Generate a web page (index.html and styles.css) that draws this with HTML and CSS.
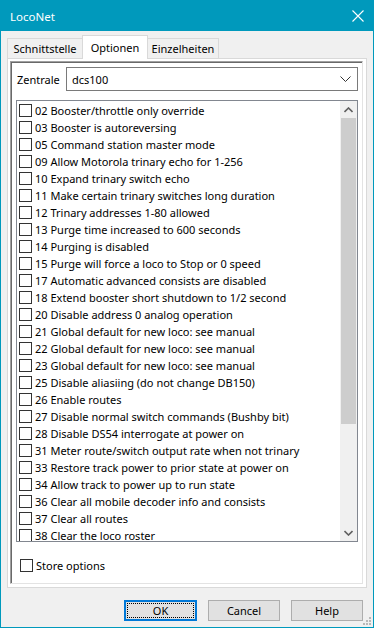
FILE: index.html
```html
<!DOCTYPE html>
<html>
<head>
<meta charset="utf-8">
<link rel="stylesheet" href="styles.css">
</head>
<body>
<div class="window">
  <div class="titlebar">
    <span class="title">LocoNet</span>
    <svg class="close" width="12" height="12" viewBox="0 0 12 12"><path d="M0.5 0.5 L11.5 11.5 M11.5 0.5 L0.5 11.5" stroke="#fff" stroke-width="1.1" fill="none"/></svg>
  </div>
  <div class="content">
    <div class="tabs">
      <div class="tab t1">Schnittstelle</div>
      <div class="tab t2 active">Optionen</div>
      <div class="tab t3">Einzelheiten</div>
    </div>
    <div class="panel">
      <div class="frame">
        <div class="zentrale">
          <span class="zlabel">Zentrale</span>
          <div class="combo">
            <span>dcs100</span>
            <svg width="11" height="7" viewBox="0 0 11 7"><path d="M0.5 0.5 L5.5 5.5 L10.5 0.5" stroke="#333" stroke-width="1" fill="none"/></svg>
          </div>
        </div>
        <div class="list">
          <div class="items">
            <div class="item"><span class="cb"></span>02 Booster/throttle only override</div>
            <div class="item"><span class="cb"></span>03 Booster is autoreversing</div>
            <div class="item"><span class="cb"></span>05 Command station master mode</div>
            <div class="item"><span class="cb"></span>09 Allow Motorola trinary echo for 1-256</div>
            <div class="item"><span class="cb"></span>10 Expand trinary switch echo</div>
            <div class="item"><span class="cb"></span>11 Make certain trinary switches long duration</div>
            <div class="item"><span class="cb"></span>12 Trinary addresses 1-80 allowed</div>
            <div class="item"><span class="cb"></span>13 Purge time increased to 600 seconds</div>
            <div class="item"><span class="cb"></span>14 Purging is disabled</div>
            <div class="item"><span class="cb"></span>15 Purge will force a loco to Stop or 0 speed</div>
            <div class="item"><span class="cb"></span>17 Automatic advanced consists are disabled</div>
            <div class="item"><span class="cb"></span>18 Extend booster short shutdown to 1/2 second</div>
            <div class="item"><span class="cb"></span>20 Disable address 0 analog operation</div>
            <div class="item"><span class="cb"></span>21 Global default for new loco: see manual</div>
            <div class="item"><span class="cb"></span>22 Global default for new loco: see manual</div>
            <div class="item"><span class="cb"></span>23 Global default for new loco: see manual</div>
            <div class="item"><span class="cb"></span>25 Disable aliasiing (do not change DB150)</div>
            <div class="item"><span class="cb"></span>26 Enable routes</div>
            <div class="item"><span class="cb"></span>27 Disable normal switch commands (Bushby bit)</div>
            <div class="item"><span class="cb"></span>28 Disable DS54 interrogate at power on</div>
            <div class="item"><span class="cb"></span>31 Meter route/switch output rate when not trinary</div>
            <div class="item"><span class="cb"></span>33 Restore track power to prior state at power on</div>
            <div class="item"><span class="cb"></span>34 Allow track to power up to run state</div>
            <div class="item"><span class="cb"></span>36 Clear all mobile decoder info and consists</div>
            <div class="item"><span class="cb"></span>37 Clear all routes</div>
            <div class="item"><span class="cb"></span>38 Clear the loco roster</div>
          </div>
          <div class="scrollbar">
            <div class="sbtn"><svg width="9" height="6" viewBox="0 0 9 6"><path d="M0.5 5 L4.5 1 L8.5 5" stroke="#606060" stroke-width="1.6" fill="none"/></svg></div>
            <div class="thumb"></div>
            <div class="track"></div>
            <div class="sbtn"><svg width="9" height="6" viewBox="0 0 9 6"><path d="M0.5 1 L4.5 5 L8.5 1" stroke="#606060" stroke-width="1.6" fill="none"/></svg></div>
          </div>
        </div>
        <div class="store"><span class="cb"></span>Store options</div>
      </div>
    </div>
    <div class="buttons">
      <div class="btn default"><span class="focus">OK</span></div>
      <div class="btn">Cancel</div>
      <div class="btn">Help</div>
    </div>
    <svg class="grip" width="9" height="9" viewBox="0 0 9 9" fill="#b8b8b8"><rect x="6" y="0" width="2" height="2"/><rect x="3" y="3" width="2" height="2"/><rect x="6" y="3" width="2" height="2"/><rect x="0" y="6" width="2" height="2"/><rect x="3" y="6" width="2" height="2"/><rect x="6" y="6" width="2" height="2"/></svg>
  </div>
</div>
</body>
</html>
```
FILE: styles.css
```css
* { box-sizing: border-box; }
html, body { margin: 0; padding: 0; }
body {
  font-family: "Noto Sans", "Open Sans", sans-serif;
  font-size: 11px;
  color: #000;
  background: #f0f0f0;
}
.window {
  width: 374px;
  height: 628px;
  border: 1px solid #0099bc;
  display: flex;
  flex-direction: column;
  background: #f0f0f0;
}
.titlebar {
  height: 30px;
  background: #0099bc;
  display: flex;
  align-items: center;
  justify-content: space-between;
  padding: 0 8px 0 9px;
  flex: none;
}
.title {
  color: #fff;
  font-size: 11.5px;
}
.close { margin-right: 1px; }
.content {
  flex: 1;
  display: flex;
  flex-direction: column;
  position: relative;
}
.tabs {
  display: flex;
  align-items: flex-end;
  height: 27px;
  padding-left: 6px;
  padding-top: 4px;
  position: relative;
  z-index: 1;
}
.tab {
  height: 20px;
  border: 1px solid #d9d9d9;
  border-bottom: none;
  background: #f0f0f0;
  display: flex;
  align-items: center;
  justify-content: center;
  line-height: 1;
}
.t1 { width: 76px; }
.t2 { width: 66px; }
.t3 { width: 72px; }
.tab + .tab { margin-left: -1px; }
.tab.active {
  height: 24px;
  background: #fff;
  margin-bottom: -1px;
  position: relative;
  z-index: 2;
}
.panel {
  margin: 0 6px;
  height: 530px;
  border: 1px solid #d9d9d9;
  background: #fff;
  padding: 2px 3px 3px 2px;
  display: flex;
  flex: none;
}
.frame {
  flex: 1;
  border: 1px solid;
  border-color: #a0a0a0 #e3e3e3 #e3e3e3 #a0a0a0;
  box-shadow: inset 1px 1px 0 #696969;
  padding: 5px 4px 0 6px;
  display: flex;
  flex-direction: column;
}
.zentrale {
  display: flex;
  align-items: center;
  height: 24px;
}
.zlabel {
  width: 49px;
  flex: none;
}
.combo {
  flex: 1;
  height: 24px;
  border: 1px solid #7a7a7a;
  background: #fff;
  display: flex;
  align-items: center;
  justify-content: space-between;
  padding: 0 6px 0 5px;
}
.list {
  margin-top: 9px;
  margin-left: -1px;
  height: 442px;
  border: 1px solid #828790;
  display: flex;
  overflow: hidden;
}
.items {
  flex: 1;
  overflow: hidden;
  padding-top: 1px;
}
.item {
  height: 17px;
  display: flex;
  align-items: center;
  white-space: nowrap;
  padding-left: 2px;
}
.cb {
  width: 13px;
  height: 13px;
  border: 1px solid #333;
  background: #fff;
  margin-right: 3px;
  flex: none;
}
.scrollbar {
  width: 17px;
  flex: none;
  display: flex;
  flex-direction: column;
  background: #f0f0f0;
}
.sbtn {
  height: 17px;
  display: flex;
  align-items: center;
  justify-content: center;
  flex: none;
}
.thumb {
  height: 306px;
  margin: 0 1px;
  background: #cdcdcd;
  flex: none;
}
.track { flex: 1; }
.store {
  display: flex;
  align-items: center;
  height: 17px;
  margin-top: 15px;
  padding-left: 3px;
}
.store .cb { margin-right: 3px; }
.buttons {
  display: flex;
  justify-content: flex-end;
  gap: 11px;
  padding-right: 10px;
  margin-top: 12px;
}
.btn {
  width: 72px;
  height: 21px;
  border: 1px solid #adadad;
  background: #e1e1e1;
  display: flex;
  align-items: center;
  justify-content: center;
}
.btn.default {
  width: 73px;
  border: 2px solid #0078d7;
  padding: 1px;
}
.focus {
  width: 100%;
  height: 100%;
  border: 1px dotted #000;
  display: flex;
  align-items: center;
  justify-content: center;
}
.grip {
  position: absolute;
  right: 1px;
  bottom: 1px;
}
```
